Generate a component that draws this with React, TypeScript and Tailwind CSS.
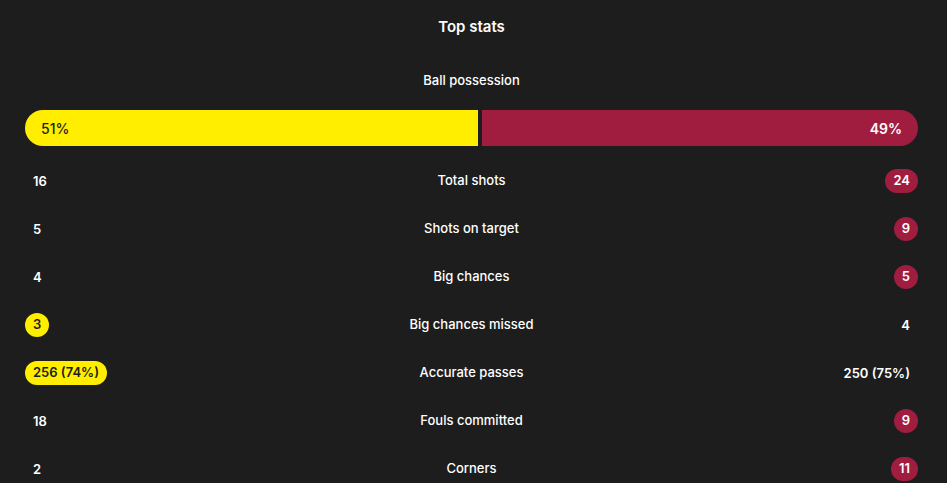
import React from "react";

type Side = "home" | "away" | null;

interface StatRow {
  label: string;
  home: string;
  away: string;
  better: Side;
}

const rows: StatRow[] = [
  { label: "Total shots", home: "16", away: "24", better: "away" },
  { label: "Shots on target", home: "5", away: "9", better: "away" },
  { label: "Big chances", home: "4", away: "5", better: "away" },
  { label: "Big chances missed", home: "3", away: "4", better: "home" },
  { label: "Accurate passes", home: "256 (74%)", away: "250 (75%)", better: "home" },
  { label: "Fouls committed", home: "18", away: "9", better: "away" },
  { label: "Corners", home: "2", away: "11", better: "away" },
];

function Value({ value, highlight, side }: { value: string; highlight: boolean; side: "home" | "away" }) {
  if (!highlight) {
    return <span className="px-2 leading-6 text-white">{value}</span>;
  }
  return (
    <span
      className={
        "inline-flex h-6 min-w-6 items-center justify-center rounded-full px-2 " +
        (side === "home" ? "bg-[#ffee00] text-[#1d1d1d]" : "bg-[#a11d40] text-white")
      }
    >
      {value}
    </span>
  );
}

export default function App() {
  const homePct = 51;
  const awayPct = 49;

  return (
    <div
      className="min-h-[483px] w-full bg-[#1d1d1d] pl-[25px] pr-[29px] text-white"
      style={{ fontFamily: "Inter, 'Noto Sans', sans-serif" }}
    >
      <h2 className="pt-[17px] text-center text-[15px] font-semibold leading-5">Top stats</h2>

      <div className="mt-[33px] text-center text-[13px] font-medium leading-5">Ball possession</div>

      <div className="mt-[20px] flex h-9 gap-1">
        <div
          className="flex items-center rounded-l-full bg-[#ffee00] pl-4 text-[14px] font-medium text-[#1d1d1d]"
          style={{ flex: homePct }}
        >
          {homePct}%
        </div>
        <div
          className="flex items-center justify-end rounded-r-full bg-[#a11d40] pr-4 text-[14px] font-semibold text-white"
          style={{ flex: awayPct }}
        >
          {awayPct}%
        </div>
      </div>

      <div className="mt-[23px] flex flex-col gap-6">
        {rows.map((r) => (
          <div key={r.label} className="flex h-6 items-center justify-between text-[13px] font-semibold">
            <div className="flex w-1/3 justify-start">
              <Value value={r.home} highlight={r.better === "home"} side="home" />
            </div>
            <div className="w-1/3 text-center font-medium">{r.label}</div>
            <div className="flex w-1/3 justify-end">
              <Value value={r.away} highlight={r.better === "away"} side="away" />
            </div>
          </div>
        ))}
      </div>
    </div>
  );
}
